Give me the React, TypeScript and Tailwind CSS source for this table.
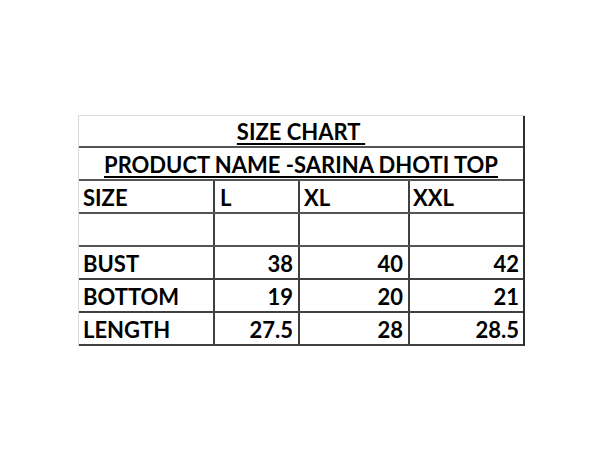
const rows: { label: string; values: string[] }[] = [
  { label: 'BUST', values: ['38', '40', '42'] },
  { label: 'BOTTOM', values: ['19', '20', '21'] },
  { label: 'LENGTH', values: ['27.5', '28', '28.5'] },
]

const cell = 'h-full flex items-end pb-[3px] border-r-2 border-r-[#404040]'

export default function App() {
  return (
    <div
      className="w-[600px] h-[460px] bg-white pt-[115px] pl-[78px] text-black font-bold text-[22px] leading-none"
      style={{ fontFamily: 'Lato, "Open Sans", sans-serif' }}
    >
      {/* light top/left edge, dark right/bottom edge like the sheet */}
      <div className="w-[447px] bg-[#dcdcdc] pt-px pl-px">
        <div className="bg-white border-r-2 border-r-[#303030]">
          <div className="h-[32px] flex items-end justify-center pb-[3px] border-b-2 border-b-[#555555]">
            <span className="underline decoration-2 underline-offset-[3px] whitespace-pre">SIZE CHART </span>
          </div>
          <div className="h-[33px] flex items-end justify-center pb-[3px] border-b-2 border-b-[#555555]">
            <span className="underline decoration-2 underline-offset-[3px]">PRODUCT NAME -SARINA DHOTI TOP</span>
          </div>

          <div className="h-[33px] flex border-b-2 border-b-[#555555]">
            <div className={`${cell} w-[136px] pl-[4px]`}>SIZE</div>
            <div className={`${cell} w-[85px] pl-[5px]`}>L</div>
            <div className={`${cell} w-[110px] pl-[4px]`}>XL</div>
            <div className="h-full flex items-end pb-[3px] w-[113px] pl-[3px]">XXL</div>
          </div>

          <div className="h-[33px] flex border-b-2 border-b-[#555555]">
            <div className={`${cell} w-[136px]`} />
            <div className={`${cell} w-[85px]`} />
            <div className={`${cell} w-[110px]`} />
            <div className="h-full w-[113px]" />
          </div>

          {rows.map(r => (
            <div key={r.label} className="h-[33px] flex border-b-2 border-b-[#404040]">
              <div className={`${cell} w-[136px] pl-[4px]`}>{r.label}</div>
              <div className={`${cell} w-[85px] justify-end pr-[5px]`}>{r.values[0]}</div>
              <div className={`${cell} w-[110px] justify-end pr-[5px]`}>{r.values[1]}</div>
              <div className="h-full flex items-end pb-[3px] w-[113px] justify-end pr-[4px]">{r.values[2]}</div>
            </div>
          ))}
        </div>
      </div>
    </div>
  )
}
